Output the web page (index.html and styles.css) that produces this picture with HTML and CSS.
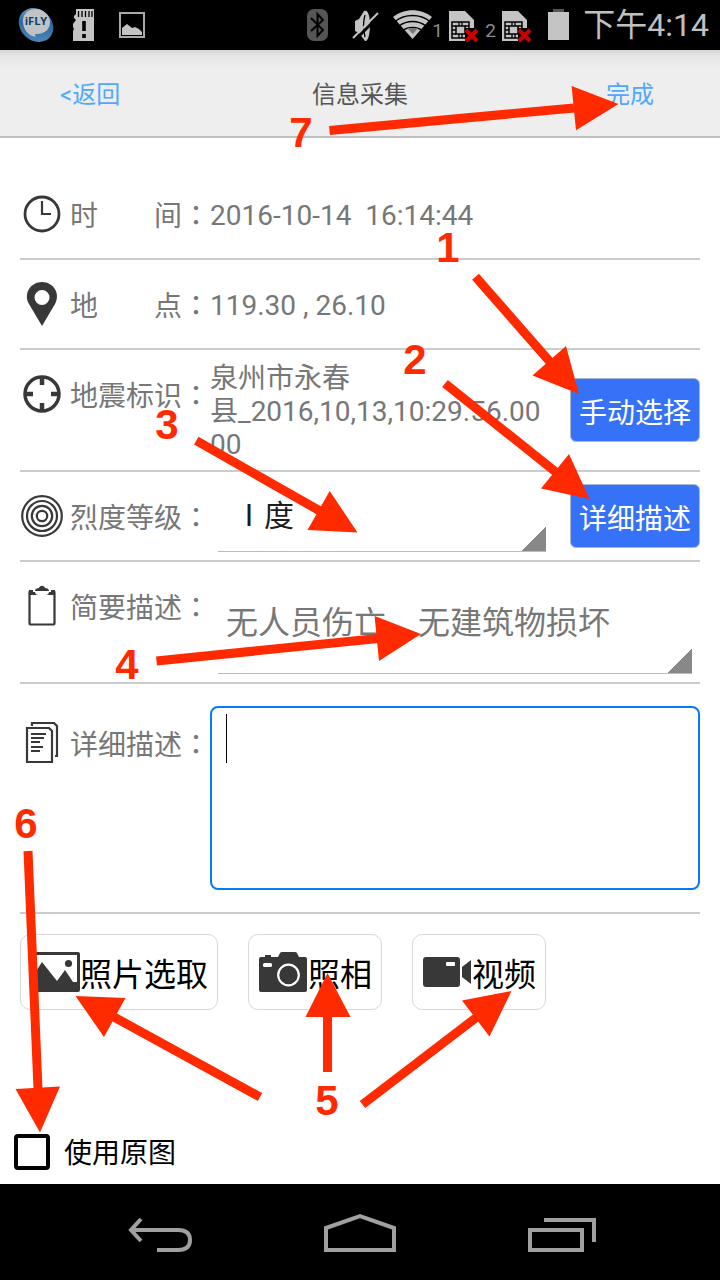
FILE: index.html
```html
<!DOCTYPE html>
<html lang="zh-CN">
<head>
<meta charset="utf-8">
<meta name="viewport" content="width=device-width">
<title>信息采集</title>
<link rel="stylesheet" href="styles.css">
</head>
<body>
<div class="screen">
  <div class="status">
    <div class="status-left">
      <svg width="36" height="36" viewBox="0 0 36 36"><defs><linearGradient id="g1" x1="0" y1="0" x2="1" y2="1"><stop offset="0" stop-color="#8fa9bf"/><stop offset=".45" stop-color="#2a6aa4"/><stop offset="1" stop-color="#5c8fba"/></linearGradient></defs><ellipse cx="18" cy="18" rx="18.500" ry="15.500" transform="rotate(42 18 18)" fill="url(#g1)"/><path d="M5 14C5 6 11 2 18 2s14 6 14 13-5 12-13 12c-2 0-3 0-1 3C10 29 5 22 5 14z" fill="#bfc3c6"/><text x="18" y="18" text-anchor="middle" class="logo-text">iFLY</text></svg>
      <svg width="22" height="34" viewBox="0 0 22 34"><path d="M4 1h18v32H1V23l1-2-1-2v-3l3-4-2-2v-2l2-2z" fill="#c4c4c4"/><path d="M6.500 3v6M10 3v6M13.500 3v6M17 3v6M20 3v6" stroke="#000" stroke-width="1.300"/><path d="M12 13v10M12 26v4" stroke="#000" stroke-width="3.600"/></svg>
      <svg width="34" height="34" viewBox="0 0 34 34"><rect x="8" y="5" width="24" height="24" fill="none" stroke="#aaa" stroke-width="2"/><path d="M10 27v-7l5-4 5 4 3-1 4 2 3 3v3z" fill="#c4c4c4"/></svg>
    </div>
    <div class="status-right">
      <svg width="36" height="36" viewBox="0 0 36 36"><rect x="0" y="2" width="21" height="32" rx="7" fill="#555"/><path d="M4 11l12 12-5.500 6V7L16 13 4 24" fill="none" stroke="#000" stroke-width="2"/></svg>
      <svg width="40" height="36" viewBox="0 0 40 36"><path d="M12 14l4-2 5-8c4-2 6 5 6 14s-2 17-5 16l-6-8-4-2z" fill="#c4c4c4"/><path d="M22 8c-2 7-2 14 0 22" stroke="#000" stroke-width="1.300" fill="none"/><path d="M12 33L37 8" stroke="#000" stroke-width="3"/><path d="M10 31L35 6" stroke="#c4c4c4" stroke-width="2"/></svg>
      <svg width="49" height="36" viewBox="0 0 49 36"><path d="M29.500 32L10 10c11-9 28-9 39 0z" fill="#c4c4c4"/><path d="M12 14.500c10-8 25-8 35 0M16 19c8-6 19-6 27 0M20 23.500c5-4 14-4 19 0" fill="none" stroke="#000" stroke-width="1.500"/><path d="M24 21h11l-5 6z" fill="#777"/></svg>
      <span class="sim-no">1</span>
      <svg width="37" height="36" viewBox="0 0 37 36"><path d="M1 4h16l9 9v21H1z" fill="#c4c4c4"/><rect x="4" y="15" width="17" height="16" fill="#c4c4c4" stroke="#000" stroke-width="1.500"/><path d="M4 19h4M4 23h4M4 27h4M17 19h4" stroke="#000" stroke-width="1.300"/><rect x="8" y="19" width="9" height="8" fill="none" stroke="#000" stroke-width="1.500"/><path d="M11 15v4M14 15v4M11 27v4M14 27v4" stroke="#000" stroke-width="1.300"/><rect x="17" y="21" width="13" height="14" fill="#000"/><path d="M18 23l11 11M29 23L18 34" stroke="#c80000" stroke-width="4"/></svg>
      <span class="sim-no">2</span>
      <svg width="37" height="36" viewBox="0 0 37 36"><path d="M1 4h16l9 9v21H1z" fill="#c4c4c4"/><rect x="4" y="15" width="17" height="16" fill="#c4c4c4" stroke="#000" stroke-width="1.500"/><path d="M4 19h4M4 23h4M4 27h4M17 19h4" stroke="#000" stroke-width="1.300"/><rect x="8" y="19" width="9" height="8" fill="none" stroke="#000" stroke-width="1.500"/><path d="M11 15v4M14 15v4M11 27v4M14 27v4" stroke="#000" stroke-width="1.300"/><rect x="17" y="21" width="13" height="14" fill="#000"/><path d="M18 23l11 11M29 23L18 34" stroke="#c80000" stroke-width="4"/></svg>
      <svg width="45" height="36" viewBox="0 0 45 36"><path d="M15 2h11v4H15z" fill="#555"/><path d="M10 5h21v28H10z" fill="#c4c4c4"/></svg>
      <span class="clock">下午4:14</span>
    </div>
  </div>

  <header class="bar">
    <button class="bar-btn back" type="button">&lt;返回</button>
    <h1 class="bar-title">信息采集</h1>
    <button class="bar-btn done" type="button">完成</button>
  </header>

  <main class="form">
    <div class="row">
      <div class="label">
        <svg width="44" height="44" viewBox="0 0 44 44"><circle cx="22" cy="22" r="17" fill="none" stroke="#383838" stroke-width="2.800"/><path d="M22 9v13h9" fill="none" stroke="#383838" stroke-width="2.200"/></svg>
        <span class="label-text">时　　间<span class="colon" lang="zh-TW">：</span></span>
      </div>
      <div class="value">2016-10-14  16:14:44</div>
    </div>
    <div class="row">
      <div class="label">
        <svg width="44" height="44" viewBox="0 0 44 44"><path fill-rule="evenodd" d="M22 44L9 22C3 11 11 0 22 0s19 11 13 22zM22 8a7.500 7.500 0 1 0 0 15 7.500 7.500 0 0 0 0-15z" fill="#383838"/></svg>
        <span class="label-text">地　　点<span class="colon" lang="zh-TW">：</span></span>
      </div>
      <div class="value">119.30 , 26.10</div>
    </div>
    <div class="row tall">
      <div class="label">
        <svg width="44" height="44" viewBox="0 0 44 44"><circle cx="22" cy="22" r="17" fill="none" stroke="#383838" stroke-width="3.500"/><path d="M22 5v8M22 31v8M5 22h8M31 22h8" stroke="#383838" stroke-width="4.500"/></svg>
        <span class="label-text">地震标识<span class="colon" lang="zh-TW">：</span></span>
      </div>
      <div class="value wrap">泉州市永春<br>县_2016,10,13,10:29.56.0000</div>
      <button class="action" type="button">手动选择</button>
    </div>
    <div class="row">
      <label class="label" for="level">
        <svg width="44" height="44" viewBox="0 0 44 44" fill="none" stroke="#383838" stroke-width="2.200"><circle cx="22" cy="22" r="19.800"/><circle cx="22" cy="22" r="15"/><circle cx="22" cy="22" r="10.200"/><circle cx="22" cy="22" r="5.200"/></svg>
        <span class="label-text">烈度等级<span class="colon" lang="zh-TW">：</span></span>
      </label>
      <select class="spinner level" id="level"><option>Ⅰ度</option></select>
      <button class="action" type="button">详细描述</button>
    </div>
    <div class="row tall">
      <label class="label" for="brief">
        <svg width="44" height="44" viewBox="0 0 44 44"><rect x="9.500" y="7" width="25" height="33.500" rx="1.500" fill="none" stroke="#383838" stroke-width="2.200"/><path d="M9 6h6v2c0 2 2 3 3 3H9zM35 6h-6v2c0 2-2 3-3 3h9z" fill="#383838"/><path d="M13 4h18v4H13z" fill="#fff"/><path d="M15 7c0-2 2-3 4-3 1-3 5-3 6 0 2 0 4 1 4 3z" fill="#383838"/></svg>
        <span class="label-text">简要描述<span class="colon" lang="zh-TW">：</span></span>
      </label>
      <select class="spinner brief" id="brief"><option>无人员伤亡，无建筑物损坏</option></select>
    </div>
    <div class="row detail">
      <label class="label" for="detail">
        <svg width="44" height="44" viewBox="0 0 44 44" fill="none" stroke="#383838" stroke-width="2.200"><path d="M12 5V2h22l3 3v30h-2"/><path d="M7 7h22l3 3v31H7z"/><path d="M11 13h15M11 17h13M11 21h9M11 26h12M11 30h9" stroke-width="1.800"/></svg>
        <span class="label-text">详细描述<span class="colon" lang="zh-TW">：</span></span>
      </label>
      <div class="note">
        <textarea class="note-box" id="detail"></textarea>
        <span class="caret"></span>
      </div>
    </div>

    <div class="media">
      <button class="media-btn" type="button">
        <svg width="50" height="40" viewBox="0 0 50 40"><rect width="50" height="40" rx="2" fill="#383838"/><path d="M3 3h44v27h-4l-8-12-8 11L12 10 3 24z" fill="#fff"/><circle cx="38.500" cy="11.500" r="3.600" fill="#383838"/></svg><span>照片选取</span>
      </button>
      <button class="media-btn" type="button">
        <svg width="50" height="40" viewBox="0 0 50 40"><path d="M3 5h4V3h6v2h7l2-4q1-1 2-1h13q1 0 2 1l2 4h6q2 0 2 2v31q0 2-2 2H3q-2 0-2-2V7q0-2 2-2z" fill="#383838"/><rect x="5" y="11" width="9" height="4" rx="1.500" fill="#fff"/><circle cx="30.500" cy="23" r="10.300" fill="none" stroke="#fff" stroke-width="2.200"/></svg><span>照相</span>
      </button>
      <button class="media-btn" type="button">
        <svg width="50" height="40" viewBox="0 0 50 40"><rect x="1" y="5" width="37" height="30" rx="3" fill="#383838"/><path d="M40 15l9-7v24l-9-7z" fill="#383838"/><rect x="24" y="10" width="9" height="4" rx="1" fill="#fff"/></svg><span>视频</span>
      </button>
    </div>
    <label class="original"><input class="tick" type="checkbox"><span class="tick-text">使用原图</span></label>
  </main>

  <nav class="nav">
    <button class="nav-btn" type="button" aria-label="返回"><svg width="72" height="44" viewBox="0 0 72 44" fill="none" stroke="#a0a0a0" stroke-width="4"><path d="M7 18h48q12 0 12 10t-12 10H34M18 7L8 18l10 11"/></svg></button>
    <button class="nav-btn" type="button" aria-label="主页"><svg width="72" height="44" viewBox="0 0 72 44" fill="none" stroke="#a0a0a0" stroke-width="4"><path d="M2 16L36 4l34 12v22H2z"/></svg></button>
    <button class="nav-btn" type="button" aria-label="最近任务"><svg width="72" height="44" viewBox="0 0 72 44" fill="none" stroke="#a0a0a0" stroke-width="4"><path d="M5 18h52v20H5zM19 8h50v22"/></svg></button>
  </nav>

  <svg class="notes" viewBox="0 0 720 1280">
    <g class="arrow">
      <path d="M329.500 130.500L574 108M475.500 276.700L551 363M445 383.500L557 473M196.300 440.700L320 511M156.500 661L378 638.500M260 1097L114 1017M327.500 1072V1016M362.500 1104.500L477 1017M28 851L38 1089"/>
    </g>
    <g class="head">
      <path d="M571.600 86L618.500 104 576 130.300zM566 346L579 394 532.500 375.500zM569 454L589.500 499 541 488.500zM329.700 491L357.500 532.500 307.500 530zM374.600 616L421 634 379 661zM75.500 996L125.500 998 104 1037zM327.500 973L305.500 1017H350.500zM511.500 991L462 1000.500 489.500 1036.500zM60 1086.500L15.500 1089 40 1132.500z"/>
    </g>
    <g class="digits">
      <text x="448" y="262">1</text>
      <text x="415" y="374">2</text>
      <text x="167" y="439">3</text>
      <text x="127" y="679">4</text>
      <text x="327" y="1115">5</text>
      <text x="26" y="838">6</text>
      <text x="301" y="147">7</text>
    </g>
  </svg>
</div>
</body>
</html>
```
FILE: styles.css
```css
* { box-sizing: border-box; }
body {
  margin: 0;
  background: #fff;
  font-family: Roboto, "Noto Sans CJK SC", sans-serif;
}
button, select, textarea { font-family: inherit; margin: 0; }
button { cursor: pointer; }
svg { display: block; flex: none; }

.screen {
  position: relative;
  display: flex;
  flex-direction: column;
  min-height: 100vh;
}

.status {
  display: flex;
  justify-content: space-between;
  align-items: center;
  height: 50px;
  padding: 0 11px 0 18px;
  background: #000;
  color: #c0c0c0;
}
.status-left { display: flex; align-items: center; gap: 18px; }
.status-right { display: flex; align-items: center; }
.logo-text { font: bold 11px "Open Sans", sans-serif; fill: #123d66; }
.sim-no { width: 16px; padding-top: 12px; font-size: 19px; line-height: 24px; color: #8c8c8c; }
.clock { font-size: 32px; line-height: 40px; white-space: nowrap; }

.bar {
  display: grid;
  grid-template-columns: 1fr auto 1fr;
  align-items: center;
  height: 88px;
  padding: 4px 60px 0;
  background: linear-gradient(#d4d4d4, #e6e6e6 6px, #eee 20px);
  border-bottom: 2px solid #c0c0c0;
}
.bar-btn {
  padding: 0;
  border: 0;
  background: none;
  color: #50a7ff;
  font-size: 24px;
  line-height: 32px;
}
.back { justify-self: start; }
.done { justify-self: end; padding-right: 6px; }
.bar-title { margin: 0; font-size: 24px; line-height: 32px; font-weight: 400; color: #555; }

.form { flex: 1; padding: 32px 20px 0; }
.row {
  display: flex;
  align-items: flex-start;
  min-height: 90px;
  border-bottom: 2px solid #ccc;
  color: #777;
  font-size: 28px;
  line-height: 33px;
}
.tall { min-height: 122px; }
.label { display: flex; flex: none; align-items: center; gap: 6px; width: 190px; height: 88px; white-space: nowrap; }
.label-text { padding-top: 2px; }
.colon { font-family: "Noto Sans CJK TC", sans-serif; }
.value { flex: 1; min-width: 0; align-self: center; padding-top: 2px; white-space: pre-wrap; }
.wrap { word-break: break-all; }
.action {
  flex: none;
  align-self: center;
  width: 130px;
  height: 64px;
  margin-left: 24px;
  padding: 2px 0 0;
  border: 1px solid #a9b7d8;
  border-radius: 6px;
  background: #3672f8;
  color: #fff;
  font-size: 28px;
}
.spinner {
  flex: 1;
  min-width: 0;
  margin-left: 8px;
  appearance: none;
  border: 0;
  border-bottom: 1px solid #bbb;
  border-radius: 0;
  outline: 0;
  background: linear-gradient(135deg, transparent 50%, #888 50%) right bottom / 24px 24px no-repeat;
}
.level { height: 80px; padding: 8px 16px 0; font-family: "DejaVu Sans Mono", "Noto Sans CJK SC", monospace; font-size: 30px; color: #1c1c1c; }
.brief { height: 112px; margin-right: 8px; padding: 10px 8px 0; font-size: 32px; color: #777; }
.detail { padding: 22px 0; }
.detail .label { height: 74px; }
.note { position: relative; flex: 1; display: flex; }
.note-box {
  flex: 1;
  height: 184px;
  padding: 8px 16px;
  border: 2px solid #0a7af0;
  border-radius: 8px;
  outline: 0;
  background: #fff;
  resize: none;
  font-size: 32px;
}
.caret { position: absolute; left: 16px; top: 8px; width: 1px; height: 49px; background: #000; }

.media { display: flex; gap: 30px; padding-top: 20px; }
.media-btn {
  display: flex;
  align-items: center;
  height: 76px;
  padding: 0 9px;
  border: 1px solid #d8d8d8;
  border-radius: 10px;
  background: #fff;
  color: #000;
  font-size: 32px;
  white-space: nowrap;
}
.original {
  display: inline-flex;
  align-items: center;
  gap: 14px;
  margin: 124px 0 14px -6px;
  font-size: 28px;
  line-height: 32px;
  color: #000;
}
.tick {
  appearance: none;
  width: 36px;
  height: 36px;
  margin: 0;
  border: 4px solid #000;
  border-radius: 4px;
  background: #fff;
}
.tick-text { padding-top: 4px; }

.nav { display: flex; height: 96px; padding: 4px 59px 0; background: #000; }
.nav-btn { flex: 1; display: flex; align-items: center; justify-content: center; padding: 0; border: 0; background: none; }

.notes { position: absolute; left: 0; top: 0; width: 100%; pointer-events: none; }
.arrow { fill: none; stroke: #ff2a00; stroke-width: 9px; }
.head { fill: #ff2a00; }
.digits { fill: #ff2a00; font: bold 42px "Liberation Sans", sans-serif; text-anchor: middle; }
```
